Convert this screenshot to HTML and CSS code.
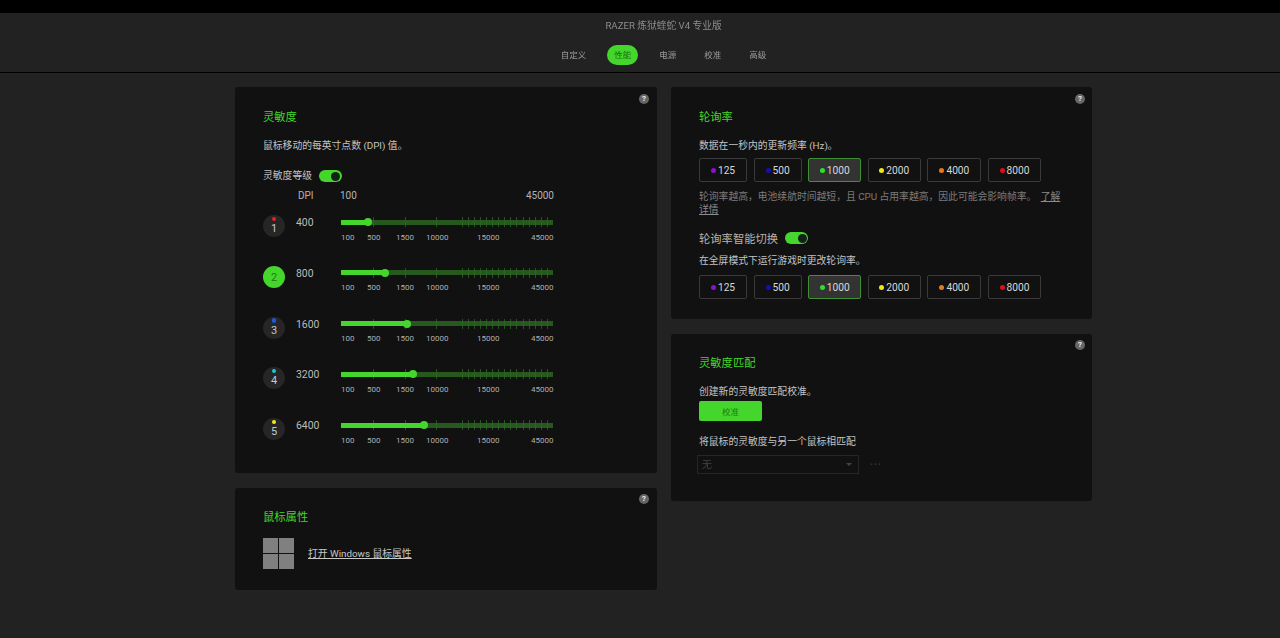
FILE: index.html
```html
<!DOCTYPE html>
<html lang="zh-CN">
<head>
<meta charset="utf-8">
<title>RAZER 炼狱蝰蛇 V4 专业版</title>
<link rel="stylesheet" href="styles.css">
</head>
<body>
<div class="topbar"></div>
<div class="shell">
  <header class="header">
    <div class="device">RAZER 炼狱蝰蛇 V4 专业版</div>
    <nav class="nav">
      <span class="tab">自定义</span>
      <span class="tab active">性能</span>
      <span class="tab">电源</span>
      <span class="tab">校准</span>
      <span class="tab">高级</span>
    </nav>
  </header>
  <main class="content">
    <div class="column">
      <section class="panel panel-dpi">
        <span class="help">?</span>
        <h2 class="title">灵敏度</h2>
        <p class="text desc">鼠标移动的每英寸点数 (DPI) 值。</p>
        <div class="toggle-row stages"><span class="text">灵敏度等级</span><span class="toggle"></span></div>
        <div class="dpi-head"><span>DPI</span><span>100</span><span>45000</span></div>

        <div class="dpi-row">
          <span class="badge"><i class="stage-dot red"></i>1</span>
          <span class="dpi-value">400</span>
          <div class="slider">
            <div class="track"><div class="ticks"></div><div class="fill" style="width:27px"></div></div>
            <div class="labels"><span>100</span><span>500</span><span>1500</span><span>10000</span><span>15000</span><span>45000</span></div>
          </div>
        </div>
        <div class="dpi-row">
          <span class="badge on">2</span>
          <span class="dpi-value">800</span>
          <div class="slider">
            <div class="track"><div class="ticks"></div><div class="fill" style="width:44px"></div></div>
            <div class="labels"><span>100</span><span>500</span><span>1500</span><span>10000</span><span>15000</span><span>45000</span></div>
          </div>
        </div>
        <div class="dpi-row">
          <span class="badge"><i class="stage-dot blue"></i>3</span>
          <span class="dpi-value">1600</span>
          <div class="slider">
            <div class="track"><div class="ticks"></div><div class="fill" style="width:66px"></div></div>
            <div class="labels"><span>100</span><span>500</span><span>1500</span><span>10000</span><span>15000</span><span>45000</span></div>
          </div>
        </div>
        <div class="dpi-row">
          <span class="badge"><i class="stage-dot cyan"></i>4</span>
          <span class="dpi-value">3200</span>
          <div class="slider">
            <div class="track"><div class="ticks"></div><div class="fill" style="width:72px"></div></div>
            <div class="labels"><span>100</span><span>500</span><span>1500</span><span>10000</span><span>15000</span><span>45000</span></div>
          </div>
        </div>
        <div class="dpi-row">
          <span class="badge"><i class="stage-dot yellow"></i>5</span>
          <span class="dpi-value">6400</span>
          <div class="slider">
            <div class="track"><div class="ticks"></div><div class="fill" style="width:83px"></div></div>
            <div class="labels"><span>100</span><span>500</span><span>1500</span><span>10000</span><span>15000</span><span>45000</span></div>
          </div>
        </div>
      </section>

      <section class="panel panel-mouse">
        <span class="help">?</span>
        <h2 class="title">鼠标属性</h2>
        <div class="win-row">
          <span class="win-logo"><i></i><i></i><i></i><i></i></span>
          <a class="link text" href="#">打开 Windows 鼠标属性</a>
        </div>
      </section>
    </div>

    <div class="column">
      <section class="panel panel-poll">
        <span class="help">?</span>
        <h2 class="title">轮询率</h2>
        <p class="text desc">数据在一秒内的更新频率 (Hz)。</p>
        <div class="rates">
          <span class="rate w48"><i class="dot purple"></i>125</span>
          <span class="rate w48"><i class="dot navy"></i>500</span>
          <span class="rate sel w53"><i class="dot green"></i>1000</span>
          <span class="rate w53"><i class="dot yellow"></i>2000</span>
          <span class="rate w54"><i class="dot orange"></i>4000</span>
          <span class="rate w53"><i class="dot crimson"></i>8000</span>
        </div>
        <p class="note">轮询率越高，电池续航时间越短，且 CPU 占用率越高，因此可能会影响帧率。 <a class="note-link first" href="#">了解</a><br><a class="note-link" href="#">详情</a></p>
        <div class="toggle-row smart"><span class="subhead">轮询率智能切换</span><span class="toggle"></span></div>
        <p class="text smart-desc">在全屏模式下运行游戏时更改轮询率。</p>
        <div class="rates rates-2">
          <span class="rate w48"><i class="dot purple"></i>125</span>
          <span class="rate w48"><i class="dot navy"></i>500</span>
          <span class="rate sel w53"><i class="dot green"></i>1000</span>
          <span class="rate w53"><i class="dot yellow"></i>2000</span>
          <span class="rate w54"><i class="dot orange"></i>4000</span>
          <span class="rate w53"><i class="dot crimson"></i>8000</span>
        </div>
      </section>

      <section class="panel panel-match">
        <span class="help">?</span>
        <h2 class="title">灵敏度匹配</h2>
        <p class="text desc">创建新的灵敏度匹配校准。</p>
        <button class="calibrate" type="button">校准</button>
        <p class="text match-label">将鼠标的灵敏度与另一个鼠标相匹配</p>
        <div class="select-row">
          <div class="select"><span>无</span><i class="caret"></i></div>
          <span class="more">···</span>
        </div>
      </section>
    </div>
  </main>
</div>
</body>
</html>
```
FILE: styles.css
```css
* { box-sizing: border-box; }
html, body { margin: 0; height: 100%; }
body {
  background: #222;
  color: #ccc;
  font-family: Roboto, "Noto Sans CJK SC", sans-serif;
  font-size: 10px;
  overflow: hidden;
}
.topbar { height: 13px; background: #000; }
.shell { padding-left: 47px; filter: blur(0.4px); }
.header {
  margin-left: -47px;
  padding-left: 47px;
  height: 60px;
  border-bottom: 1px solid #000;
  display: flex;
  flex-direction: column;
  align-items: center;
}
.device { margin-top: 6px; line-height: 13px; font-size: 9.7px; color: #8c8c8c; }
.nav { display: flex; gap: 14px; margin-top: 13px; }
.tab {
  height: 20px;
  line-height: 20px;
  padding: 0 7px;
  font-size: 8.5px;
  color: #9a9a9a;
  border-radius: 10px;
}
.tab.active { background: #44d62c; color: #1a6e10; }

.content {
  width: 857px;
  margin: 14px auto 0;
  display: grid;
  grid-template-columns: 422px 421px;
  column-gap: 14px;
  align-items: start;
}
.column { display: flex; flex-direction: column; gap: 15px; }
.panel {
  position: relative;
  background: #111;
  border-radius: 3px;
  padding: 21px 28px 0;
}
.panel-dpi { height: 386px; padding-top: 22px; }
.panel-mouse { height: 102px; }
.panel-poll { height: 232px; padding-top: 22px; }
.panel-match { height: 167px; }

.help {
  position: absolute;
  top: 7px;
  right: 8px;
  width: 10px;
  height: 10px;
  border-radius: 50%;
  background: #666;
  color: #eee;
  font-size: 8px;
  font-weight: 700;
  line-height: 10px;
  text-align: center;
}
.panel-mouse .help, .panel-match .help { top: 6px; }
.panel-poll .help, .panel-match .help { right: 7px; }
.title {
  margin: 0;
  font-size: 11.3px;
  font-weight: 400;
  line-height: 18px;
  color: #44d62c;
}
.text { margin: 0; font-size: 9.8px; line-height: 14px; color: #c4c4c4; }
.desc { margin-top: 12px; }

.toggle-row { display: flex; align-items: center; }
.stages { margin-top: 16px; height: 14px; gap: 7px; }
.toggle {
  position: relative;
  display: block;
  width: 23px;
  height: 12px;
  border-radius: 6px;
  background: #44d62c;
}
.toggle::after {
  content: "";
  position: absolute;
  right: 1.5px;
  top: 1.5px;
  width: 9px;
  height: 9px;
  border-radius: 50%;
  background: #14201a;
}

.dpi-head {
  margin-top: 6px;
  height: 14px;
  line-height: 14px;
  font-size: 10px;
  color: #b4b4b4;
  display: grid;
  grid-template-columns: 35px 1fr auto;
  width: 291px;
  padding-left: 35px;
  margin-bottom: 13px;
}
.dpi-head span:nth-child(2) { padding-left: 7px; }
.dpi-row {
  height: 50.75px;
  display: grid;
  grid-template-columns: 22px 56px 212px;
  align-items: start;
}
.badge {
  position: relative;
  width: 22px;
  height: 22px;
  margin-top: -1px;
  border-radius: 50%;
  background: #262626;
  color: #c8c8c8;
  font-size: 11px;
  line-height: 26px;
  text-align: center;
  padding-top: 1px;
}
.badge.on { background: #44d62c; color: #1d7d10; padding-top: 0; line-height: 23px; }
.stage-dot {
  position: absolute;
  top: 1.5px;
  left: 8.75px;
  width: 4.5px;
  height: 4.5px;
  border-radius: 50%;
}
.red { background: #e8202a; }
.blue { background: #1a5ce0; }
.cyan { background: #17c8e0; }
.yellow { background: #f2ea18; }
.dpi-value {
  margin-left: 11px;
  line-height: 14px;
  font-size: 10.4px;
  color: #bcbcbc;
}
.slider { width: 212px; }
.track {
  position: relative;
  height: 12px;
  background: linear-gradient(#27591f, #27591f) center / 100% 5px no-repeat;
}
.ticks {
  position: absolute;
  inset: 1px 0;
  opacity: 0.75;
  background-image:
    linear-gradient(#2e6a25, #2e6a25),
    linear-gradient(#2e6a25, #2e6a25),
    linear-gradient(#2e6a25, #2e6a25),
    repeating-linear-gradient(90deg, #2e6a25 0 1px, transparent 1px 6.05px);
  background-repeat: no-repeat;
  background-size: 1px 100%, 1px 100%, 1px 100%, 91px 100%;
  background-position: 32px 0, 64px 0, 95px 0, 121px 0;
}
.fill {
  position: absolute;
  left: 0;
  top: 3.5px;
  height: 5px;
  background: #44d62c;
}
.fill::after {
  content: "";
  position: absolute;
  right: -4px;
  top: -1.5px;
  width: 8px;
  height: 8px;
  border-radius: 50%;
  background: #44d62c;
}
.labels {
  margin-top: 4.6px;
  display: grid;
  grid-template-columns: 26px 29px 30px 51px 54px 22px;
  font-size: 8px;
  line-height: 10px;
  color: #b0b0b0;
  white-space: nowrap;
}

.win-row { display: flex; align-items: center; gap: 14px; margin-top: 11px; }
.win-logo {
  display: grid;
  grid-template-columns: 15px 15px;
  grid-auto-rows: 15px;
  gap: 1px;
}
.win-logo i { background: #808080; }
.link { color: #c8c8c8; text-decoration: underline; }

.rates { display: flex; gap: 6.6px; margin-top: 5px; }
.rates-2 { margin-top: 7px; }
.rate {
  height: 24px;
  border: 1px solid #3a3a3a;
  border-radius: 2px;
  display: flex;
  align-items: center;
  justify-content: center;
  gap: 2px;
  font-size: 10.2px;
  color: #d8d8d8;
}
.w48 { width: 48px; }
.w53 { width: 53px; }
.w54 { width: 54px; }
.rate.sel { background: #333; border-color: #3f8f35; }
.dot { width: 5px; height: 5px; border-radius: 50%; }
.purple { background: #8a12cc; }
.navy { background: #1212b4; }
.green { background: #2ee02e; }
.orange { background: #e67a1a; }
.crimson { background: #dc1018; }
.dot.yellow { background: #f0e814; }
.note {
  margin: 8px 0 0;
  font-size: 9.8px;
  line-height: 13px;
  color: #7c7c7c;
}
.note-link { color: #8c8c8c; text-decoration: underline; }
.note-link.first { margin-left: 2px; }
.smart { margin-top: 14px; height: 16px; gap: 7px; }
.subhead { font-size: 11.3px; color: #b4b4b4; }
.smart-desc { margin-top: 8px; }

.calibrate {
  display: block;
  margin-top: 2px;
  width: 63px;
  height: 20px;
  border: 0;
  border-radius: 2px;
  background: #44d62c;
  color: #1d7d10;
  font: inherit;
  font-size: 8.5px;
  padding: 0;
}
.match-label { margin-top: 14px; }
.select-row { display: flex; align-items: center; gap: 11px; margin: 6px 0 0 -2px; }
.select {
  position: relative;
  width: 162px;
  height: 19px;
  border: 1px solid #262626;
  padding-left: 4px;
  line-height: 17px;
  color: #444;
  font-size: 10px;
}
.caret {
  position: absolute;
  right: 6px;
  top: 7px;
  width: 0;
  height: 0;
  border-left: 3.5px solid transparent;
  border-right: 3.5px solid transparent;
  border-top: 3.5px solid #444;
}
.more { color: #333; font-size: 10px; font-weight: 700; letter-spacing: 1px; }
```
